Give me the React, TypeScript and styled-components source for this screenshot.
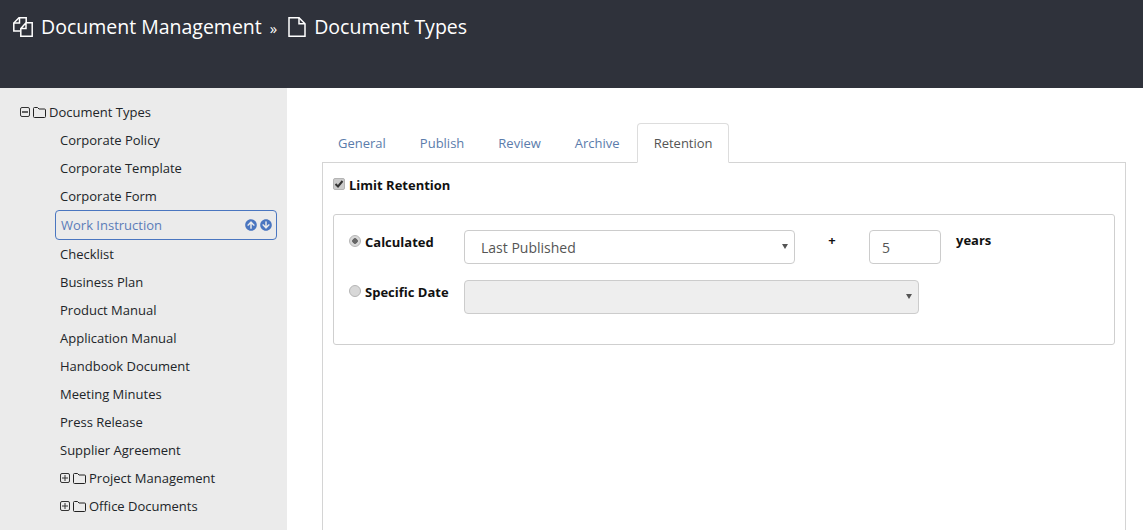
import { FaArrowCircleDown, FaArrowCircleUp } from 'react-icons/fa'
import styled, { createGlobalStyle } from 'styled-components'

const GlobalStyle = createGlobalStyle`
  html, body {
    margin: 0;
    height: 100%;
    overflow: hidden;
    background: #fff;
    font-family: "Open Sans", "Liberation Sans", sans-serif;
  }
  * { box-sizing: border-box; }
`
const Page = styled.div`
  height: 530px;
  display: flex;
  flex-direction: column;
  overflow: hidden;
`
const Header = styled.header`
  height: 88px;
  flex: none;
  background: #2f323b;
  color: #fff;
  padding: 13px 0 0 13px;
  display: flex;
  align-items: flex-start;
  font-size: 19.5px;
  line-height: 27px;
`
const Crumb = styled.span`
  display: flex;
  align-items: center;
  gap: 8px;
  svg { flex: none; margin-top: 1px; }
`
const Separator = styled.span`
  margin: 2px 11px 0 8px;
  font-size: 15px;
`
const Body = styled.div`
  flex: 1;
  display: flex;
  min-height: 0;
`
const Sidebar = styled.nav`
  width: 287px;
  flex: none;
  background: #ebebeb;
  padding: 10px 10px 0 20px;
  font-size: 13px;
  color: #212529;
`
const FolderRow = styled.div<{ $indent?: boolean }>`
  height: 28px;
  display: flex;
  align-items: center;
  gap: 3px;
  padding-left: ${({ $indent }) => ($indent ? '40px' : '0')};
`
const Item = styled.div`
  height: 28px;
  line-height: 28px;
  padding-left: 40px;
`
const SelectedItem = styled.div`
  height: 30px;
  margin-left: 35px;
  border: 1px solid #4a76c0;
  border-radius: 4px;
  padding: 0 4px 0 5px;
  display: flex;
  align-items: center;
  justify-content: space-between;
  color: #5b7cb8;
`
const MoveButtons = styled.span`
  display: flex;
  gap: 3px;
  color: #4a76c0;
  font-size: 12px;
  svg { display: block; }
`
const Main = styled.main`
  flex: 1;
  padding: 35px 17px 0 35px;
  min-width: 0;
`
const Tabs = styled.div`
  display: flex;
  height: 39px;
  font-size: 13px;
`
const Tab = styled.div<{ $active?: boolean }>`
  height: 40px;
  padding: 0 15px 0 ${({ $active }) => ($active ? '16px' : '15px')};
  margin: 0 2px 0 ${({ $active }) => ($active ? '-1px' : '0')};
  line-height: 38px;
  color: ${({ $active }) => ($active ? '#555' : '#5b7cab')};
  background: ${({ $active }) => ($active ? '#fff' : 'transparent')};
  border: 1px solid ${({ $active }) => ($active ? '#ddd' : 'transparent')};
  border-bottom-color: ${({ $active }) => ($active ? '#fff' : 'transparent')};
  border-radius: 4px 4px 0 0;
  position: relative;
  z-index: 1;
`
const Panel = styled.section`
  border: 1px solid #d4d4d4;
  border-bottom: none;
  height: 400px;
  padding: 14px 10px 0 10px;
`
const LimitRow = styled.label`
  display: flex;
  align-items: center;
  gap: 4px;
  height: 16px;
  font-size: 13px;
  font-weight: 700;
  color: #111;
`
const CheckBox = styled.span`
  width: 12px;
  height: 12px;
  border-radius: 2px;
  background: #cbcbcb;
  border: 1px solid #b4b4b4;
  display: flex;
  align-items: center;
  justify-content: center;
  margin-top: -3px;
`
const RetentionBox = styled.div`
  margin-top: 21px;
  border: 1px solid #cfcfcf;
  border-radius: 3px;
  padding: 15px 15px 30px;
  display: flex;
  flex-direction: column;
  gap: 16px;
`
const FormRow = styled.div`
  display: flex;
  align-items: flex-start;
`
const RadioLabel = styled.label`
  width: 115px;
  flex: none;
  display: flex;
  align-items: flex-start;
  gap: 4px;
  padding-top: 4px;
  font-size: 13px;
  font-weight: 700;
  line-height: 16px;
  color: #111;
`
const Radio = styled.span<{ $checked?: boolean }>`
  width: 12px;
  height: 12px;
  flex: none;
  border-radius: 50%;
  border: 1px solid #b5b5b5;
  background: ${({ $checked }) =>
    $checked ? 'radial-gradient(circle, #666 0 2.5px, #d8d8d8 3px)' : '#d8d8d8'};
  margin-top: 1px;
`
const SelectWrap = styled.div<{ $width: number }>`
  position: relative;
  width: ${({ $width }) => $width}px;
  height: 34px;
  flex: none;
  &::after {
    content: '';
    position: absolute;
    right: 7px;
    top: 14px;
    border-style: solid;
    border-width: 5px 3px 0;
    border-color: #555 transparent transparent;
    pointer-events: none;
  }
`
const Select = styled.select`
  appearance: none;
  width: 100%;
  height: 100%;
  border: 1px solid #ccc;
  border-radius: 4px;
  background: #fff;
  color: #555;
  font: 14px "Open Sans", sans-serif;
  padding: 0 16px;
  &:disabled {
    background: #eee;
    opacity: 1;
  }
`
const Plus = styled.span`
  width: 74px;
  flex: none;
  font-size: 13px;
  font-weight: 700;
  line-height: 20px;
  text-align: center;
  color: #111;
`
const NumberInput = styled.input`
  width: 72px;
  height: 34px;
  flex: none;
  border: 1px solid #ccc;
  border-radius: 4px;
  padding: 0 12px;
  color: #555;
  font: 14px "Open Sans", sans-serif;
`
const Unit = styled.span`
  margin-left: 15px;
  font-size: 13px;
  font-weight: 700;
  line-height: 20px;
  color: #111;
`

function FilesIcon() {
  return (
    <svg width="20" height="20" viewBox="0 0 20 20" fill="none" stroke="#fff" strokeWidth="1.5">
      <path d="M7 14H.8V6L6 .8h7.200V5.500" />
      <path d="M6.500.8V6H.8" />
      <path d="M13 5.800h6.200v13.400H7.800V11.500L13 5.800zM13 5.800v5.700H7.800" />
    </svg>
  )
}

function FileIcon() {
  return (
    <svg width="18" height="20" viewBox="0 0 18 20" fill="none" stroke="#fff" strokeWidth="1.5">
      <path d="M1 .8h10l6 6v12.400H1V.8z" />
      <path d="M11 .8v6h6" />
    </svg>
  )
}

function FolderIcon() {
  return (
    <svg width="13" height="11" viewBox="0 0 13 11" fill="none" stroke="#222" strokeWidth="1">
      <path d="M1.500.5h3l1.500 1.500h5.500a1 1 0 0 1 1 1v6.500a1 1 0 0 1-1 1h-10a1 1 0 0 1-1-1v-8a1 1 0 0 1 1-1z" />
    </svg>
  )
}

function TreeToggle({ open }: { open?: boolean }) {
  return (
    <svg width="10" height="10" viewBox="0 0 10 10" fill="none" stroke="#333" strokeWidth="1">
      <rect x=".5" y=".5" width="9" height="9" rx="1.500" />
      <path d="M2 5h6" strokeWidth={open ? 1.500 : 1} />
      {!open && <path d="M5 2v6" />}
    </svg>
  )
}

const items = ['Corporate Policy', 'Corporate Template', 'Corporate Form']
const moreItems = [
  'Checklist',
  'Business Plan',
  'Product Manual',
  'Application Manual',
  'Handbook Document',
  'Meeting Minutes',
  'Press Release',
  'Supplier Agreement',
]
const tabs = ['General', 'Publish', 'Review', 'Archive']

export default function App() {
  return (
    <Page>
      <GlobalStyle />
      <Header>
        <Crumb>
          <FilesIcon />
          Document Management
        </Crumb>
        <Separator>»</Separator>
        <Crumb>
          <FileIcon />
          Document Types
        </Crumb>
      </Header>
      <Body>
        <Sidebar>
          <FolderRow>
            <TreeToggle open />
            <FolderIcon />
            Document Types
          </FolderRow>
          {items.map((name) => (
            <Item key={name}>{name}</Item>
          ))}
          <SelectedItem>
            Work Instruction
            <MoveButtons>
              <FaArrowCircleUp />
              <FaArrowCircleDown />
            </MoveButtons>
          </SelectedItem>
          {moreItems.map((name) => (
            <Item key={name}>{name}</Item>
          ))}
          <FolderRow $indent>
            <TreeToggle />
            <FolderIcon />
            Project Management
          </FolderRow>
          <FolderRow $indent>
            <TreeToggle />
            <FolderIcon />
            Office Documents
          </FolderRow>
        </Sidebar>
        <Main>
          <Tabs>
            {tabs.map((name) => (
              <Tab key={name}>{name}</Tab>
            ))}
            <Tab $active>Retention</Tab>
          </Tabs>
          <Panel>
            <LimitRow>
              <CheckBox>
                <svg width="10" height="10" viewBox="0 0 10 10" fill="none" stroke="#333" strokeWidth="2">
                  <path d="M1.500 5l2.500 2.500L8.500 2" />
                </svg>
              </CheckBox>
              Limit Retention
            </LimitRow>
            <RetentionBox>
              <FormRow>
                <RadioLabel>
                  <Radio $checked />
                  Calculated
                </RadioLabel>
                <SelectWrap $width={331}>
                  <Select defaultValue="last">
                    <option value="last">Last Published</option>
                  </Select>
                </SelectWrap>
                <Plus>+</Plus>
                <NumberInput defaultValue="5" />
                <Unit>years</Unit>
              </FormRow>
              <FormRow>
                <RadioLabel>
                  <Radio />
                  Specific Date
                </RadioLabel>
                <SelectWrap $width={455}>
                  <Select disabled />
                </SelectWrap>
              </FormRow>
            </RetentionBox>
          </Panel>
        </Main>
      </Body>
    </Page>
  )
}
